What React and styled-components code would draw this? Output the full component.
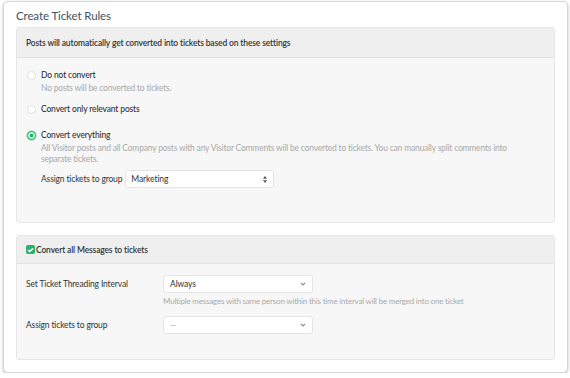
import React from 'react';
import styled, {createGlobalStyle} from 'styled-components';

const GREEN = '#27b36d';

const GlobalStyle = createGlobalStyle`
  body {
    margin: 0;
    background: #fff;
    font-family: Lato, "Open Sans", sans-serif;
    color: #333;
  }
`;

const Card = styled.div`
  margin: 1px 0 0 3px;
  width: 539px;
  padding: 3px 12px 12px 12px;
  border: 1px solid #d6d6d6;
  border-radius: 5px;
  box-shadow: 0 1px 3px rgba(0,0,0,0.25);
  background: #fff;
`;

const Title = styled.h2`
  margin: 0;
  height: 22px;
  line-height: 22px;
  font-size: 11.5px;
  letter-spacing: -0.1px;
  font-weight: 400;
  color: #3d5166;
`;

const Panel = styled.div`
  border: 1px solid #e6e6e6;
  border-radius: 3px;
  background: #f7f7f7;
  margin-top: ${props => props.gap || 0}px;
`;

const PanelHeader = styled.div`
  display: flex;
  align-items: center;
  gap: 1px;
  height: ${props => props.h}px;
  padding: 0 9px;
  background: #efefef;
  border-bottom: 1px solid #e3e3e3;
  font-size: 8.5px;
  letter-spacing: -0.15px;
  font-weight: 600;
  color: #333;
`;

const PanelBody = styled.div`
  padding: ${props => props.pad};
  height: ${props => props.h}px;
  box-sizing: border-box;
`;

const Option = styled.div`
  margin-bottom: ${props => props.mb || 0}px;
`;

const OptionRow = styled.label`
  display: flex;
  align-items: center;
  gap: 5px;
  font-size: 8.5px;
  letter-spacing: -0.15px;
  font-weight: 500;
  color: #333;
  height: 14px;
`;

const Radio = styled.span`
  width: 9px;
  height: 9px;
  border-radius: 50%;
  box-sizing: border-box;
  background: ${props => props.checked ? GREEN : '#fff'};
  border: 1px solid ${props => props.checked ? GREEN : '#e0e0e0'};
  box-shadow: ${props => props.checked ? 'inset 0 0 0 1.5px #fff, 0 0 0 1px rgba(39,179,109,0.25)' : 'none'};
`;

const Help = styled.div`
  padding-left: ${props => props.indent || 0}px;
  margin-top: ${props => props.mt || 0}px;
  font-size: ${props => props.size || 8.5}px;
  letter-spacing: -0.2px;
  line-height: 11px;
  color: #a9a9a9;
`;

const InlineRow = styled.div`
  display: flex;
  align-items: center;
  gap: 3px;
  padding-left: 14px;
  margin-top: 5px;
  font-size: 8.5px;
  letter-spacing: -0.15px;
  color: #333;
`;

const SelectBox = styled.div`
  display: flex;
  align-items: center;
  justify-content: space-between;
  box-sizing: border-box;
  width: ${props => props.w}px;
  height: 18px;
  padding: 0 6px 0 ${props => props.pl || 5}px;
  background: #fff;
  border: 1px solid #e4e4e4;
  border-radius: 3px;
  font-size: 8.5px;
  letter-spacing: -0.1px;
  color: ${props => props.muted ? '#aaa' : '#333'};
`;

const CheckBox = styled.span`
  display: inline-flex;
  align-items: center;
  justify-content: center;
  width: 9px;
  height: 9px;
  border-radius: 2px;
  background: ${GREEN};
`;

const FieldRow = styled.div`
  display: grid;
  grid-template-columns: 137px 150px;
  align-items: start;
  margin-bottom: ${props => props.mb || 0}px;
`;

const FieldLabel = styled.div`
  font-size: 8.5px;
  letter-spacing: -0.15px;
  color: #333;
  line-height: 18px;
`;

const FieldHelp = styled(Help)`
  grid-column: 2;
  white-space: nowrap;
`;

const UpDown = () => (
    <svg width="4" height="7" viewBox="0 0 4 7">
        <path d="M2 0 L4 2.8 H0 Z M2 7 L4 4.2 H0 Z" fill="#555"/>
    </svg>
);

const Chevron = () => (
    <svg width="6" height="4" viewBox="0 0 6 4">
        <path d="M0.8 0.8 L3 3 L5.2 0.8" fill="none" stroke="#8a8a8a" strokeWidth="1.1"/>
    </svg>
);

const Check = () => (
    <svg width="7" height="6" viewBox="0 0 7 6">
        <path d="M1 3 L2.8 4.6 L6 1.2" fill="none" stroke="#fff" strokeWidth="1.4"/>
    </svg>
);

export default function App() {
    return (
        <>
            <GlobalStyle/>
            <Card>
                <Title>Create Ticket Rules</Title>
                <Panel>
                    <PanelHeader h={29}>Posts will automatically get converted into tickets based on these settings</PanelHeader>
                    <PanelBody pad="10px 10px 0 10px" h={164}>
                        <Option mb={8}>
                            <OptionRow><Radio/>Do not convert</OptionRow>
                            <Help indent={14} mt={1}>No posts will be converted to tickets.</Help>
                        </Option>
                        <Option mb={12}>
                            <OptionRow><Radio/>Convert only relevant posts</OptionRow>
                        </Option>
                        <Option>
                            <OptionRow><Radio checked/>Convert everything</OptionRow>
                            <Help indent={14} mt={1}>
                                All Visitor posts and all Company posts with any Visitor Comments will be converted to tickets. You can manually split comments into<br/>separate tickets.
                            </Help>
                            <InlineRow>
                                Assign tickets to group
                                <SelectBox w={149}>Marketing<UpDown/></SelectBox>
                            </InlineRow>
                        </Option>
                    </PanelBody>
                </Panel>
                <Panel gap={12}>
                    <PanelHeader h={27}><CheckBox><Check/></CheckBox>Convert all Messages to tickets</PanelHeader>
                    <PanelBody pad="11px 10px 0 9px" h={95}>
                        <FieldRow mb={9}>
                            <FieldLabel>Set Ticket Threading Interval</FieldLabel>
                            <SelectBox w={150} pl={6}>Always<Chevron/></SelectBox>
                            <FieldHelp size={8} mt={3}>Multiple messages with same person within this time interval will be merged into one ticket</FieldHelp>
                        </FieldRow>
                        <FieldRow>
                            <FieldLabel>Assign tickets to group</FieldLabel>
                            <SelectBox w={150} pl={6} muted>--<Chevron/></SelectBox>
                        </FieldRow>
                    </PanelBody>
                </Panel>
            </Card>
        </>
    );
}
